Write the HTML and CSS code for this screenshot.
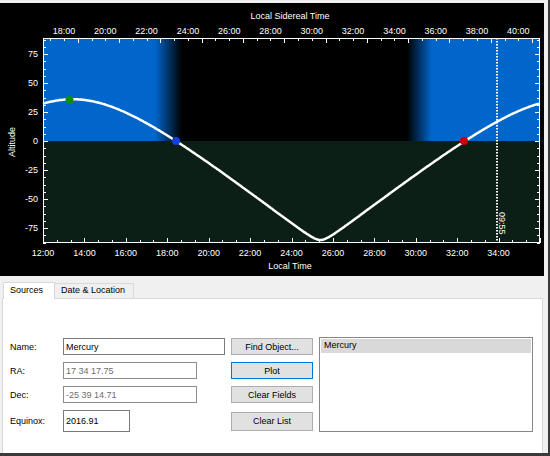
FILE: index.html
```html
<!DOCTYPE html>
<html lang="en">
<head>
  <meta charset="utf-8" />
  <title>Altitude Plot</title>
  <link rel="stylesheet" href="styles.css">
</head>
<body>
  <div id="window">

    <div id="chart">
      <svg id="plot" width="544" height="273" viewBox="0 3 544 273">
        <defs>
          <linearGradient id="sky" x1="43" y1="0" x2="540" y2="0" gradientUnits="userSpaceOnUse">
            <stop offset="0" stop-color="#0066cc" />
            <stop offset="0.2254" stop-color="#0066cc" />
            <stop offset="0.2797" stop-color="#000" />
            <stop offset="0.7324" stop-color="#000" />
            <stop offset="0.7827" stop-color="#0066cc" />
            <stop offset="1" stop-color="#0066cc" />
          </linearGradient>
        </defs>
        <rect x="0" y="3" width="544" height="273" fill="#000" />
        <rect x="43" y="38" width="497" height="103" fill="url(#sky)" />
        <rect x="43" y="141" width="497" height="102" fill="#0b1f16" />

        <path id="curve" d="" fill="none" stroke="#fff" stroke-width="2.5" stroke-linejoin="round" />
        <circle cx="69.5" cy="100" r="4" fill="#0e8e0e" />
        <circle cx="176" cy="141" r="4" fill="#1040e0" />
        <circle cx="464" cy="141" r="4" fill="#c80000" />

        <line x1="497" y1="38" x2="497" y2="243" stroke="#fff" stroke-width="2" stroke-dasharray="1.5 1.5" />
        <text class="now" transform="translate(499 212) rotate(90)">09:55</text>

        <rect x="43.5" y="38.5" width="496" height="204" fill="none" stroke="#fff" stroke-width="1" />
        <path id="ticks" d="" fill="none" stroke="#fff" stroke-width="1" />

        <g class="labels">
          <text class="title" x="290" y="19">Local Sidereal Time</text>
          <text x="64" y="34">18:00</text>
          <text x="105.3" y="34">20:00</text>
          <text x="146.6" y="34">22:00</text>
          <text x="187.9" y="34">24:00</text>
          <text x="229.2" y="34">26:00</text>
          <text x="270.5" y="34">28:00</text>
          <text x="311.8" y="34">30:00</text>
          <text x="353.1" y="34">32:00</text>
          <text x="394.4" y="34">34:00</text>
          <text x="435.7" y="34">36:00</text>
          <text x="477" y="34">38:00</text>
          <text x="518.3" y="34">40:00</text>

          <text x="43" y="256">12:00</text>
          <text x="84.4" y="256">14:00</text>
          <text x="125.8" y="256">16:00</text>
          <text x="167.3" y="256">18:00</text>
          <text x="208.7" y="256">20:00</text>
          <text x="250.1" y="256">22:00</text>
          <text x="291.5" y="256">24:00</text>
          <text x="332.9" y="256">26:00</text>
          <text x="374.4" y="256">28:00</text>
          <text x="415.8" y="256">30:00</text>
          <text x="457.2" y="256">32:00</text>
          <text x="498.6" y="256">34:00</text>
          <text class="title" x="290" y="269">Local Time</text>

          <text class="title" transform="translate(15 142) rotate(-90)">Altitude</text>
        </g>
        <g class="labels yaxis">
          <text x="38" y="57">75</text>
          <text x="38" y="86">50</text>
          <text x="38" y="115">25</text>
          <text x="38" y="144">0</text>
          <text x="38" y="173">-25</text>
          <text x="38" y="202">-50</text>
          <text x="38" y="231">-75</text>
        </g>
      </svg>
    </div>

    <div class="tabs">
      <div class="tab selected">Sources</div>
      <div class="tab">Date &amp; Location</div>
    </div>

    <div class="pane">
      <div class="sources">
        <label class="field-label">Name:</label>
        <input class="field name" type="text" value="Mercury" />
        <button class="btn">Find Object...</button>
        <div class="list">
          <div class="list-item">Mercury</div>
        </div>

        <label class="field-label">RA:</label>
        <input class="field coord ro" type="text" value="17 34 17.75" />
        <button class="btn default">Plot</button>

        <label class="field-label">Dec:</label>
        <input class="field coord ro" type="text" value="-25 39 14.71" />
        <button class="btn">Clear Fields</button>

        <label class="field-label">Equinox:</label>
        <input class="field equinox" type="text" value="2016.91" />
        <button class="btn tall">Clear List</button>
      </div>
    </div>

  </div>
  <script src="chart.js"></script>
</body>
</html>
```

FILE: styles.css
```css
html, body { margin: 0; padding: 0; }
body { background: #f0f0f0; font-family: "Liberation Sans", Arial, sans-serif; font-size: 9px; color: #000; }

#window {
    box-sizing: border-box;
    width: 550px;
    height: 456px;
    padding-top: 3px;
    border-right: 2px solid #3a3a3a;
    border-bottom: 3px solid #3a3a3a;
    overflow: hidden;
}

#chart { width: 544px; height: 273px; line-height: 0; }
#plot { display: block; }
#plot text { font-family: "Liberation Sans", Arial, sans-serif; font-size: 9px; fill: #fff; }
#plot .labels text { text-anchor: middle; }
#plot .yaxis text { text-anchor: end; }
#plot .now { text-anchor: start; }

/* tab bar */
.tabs {
    display: flex;
    align-items: flex-end;
    height: 16px;
    margin-top: 6px;
    padding-left: 3px;
    position: relative;
    z-index: 1;
}
.tab {
    box-sizing: border-box;
    height: 15px;
    line-height: 13px;
    padding-left: 6px;
    border: 1px solid #d9d9d9;
    border-bottom: none;
    background: #f0f0f0;
    width: 80px;
}
.tab.selected {
    height: 17px;
    line-height: 15px;
    width: 52px;
    margin-bottom: -1px;
    margin-right: -1px;
    background: #fff;
}

.pane {
    box-sizing: border-box;
    width: 541px;
    height: 156px;
    margin-left: 2px;
    padding: 39px 0 0 7px;
    background: #fff;
    border: 1px solid #d9d9d9;
}

.sources {
    display: grid;
    grid-template-columns: 47px 162px 82px 214px;
    grid-template-rows: 17px 17px 17px 22px;
    column-gap: 6px;
    row-gap: 7px;
}
.field-label { align-self: center; }

.field {
    box-sizing: border-box;
    height: 100%;
    margin: 0;
    padding: 0 2px;
    border: 1px solid #7a7a7a;
    font-family: inherit;
    font-size: 9px;
    color: #000;
    outline: none;
    justify-self: start;
}
.field.name { width: 162px; }
.field.coord { width: 134px; }
.field.equinox { width: 67px; }
.field.ro { color: #6d6d6d; border-color: #8c8c8c; }

.btn {
    box-sizing: border-box;
    height: 17px;
    margin: 0;
    padding: 0;
    border: 1px solid #adadad;
    background: #e1e1e1;
    font-family: inherit;
    font-size: 9px;
    color: #000;
}
.btn.default { border-color: #0078d7; }
.btn.tall { height: 19px; align-self: center; }

.list {
    grid-column: 4;
    grid-row: 1 / span 4;
    box-sizing: border-box;
    margin-top: -1px;
    height: 95px;
    padding: 1px;
    border: 1px solid #828790;
    background: #fff;
}
.list-item {
    height: 14px;
    line-height: 13px;
    padding-left: 3px;
    background: #d9d9d9;
}
```

FILE: chart.js
```js
(function () {
  var left = 43, right = 540, top = 38, bottom = 243, zero = 141;
  var hourPx = (right - left) / 24;    // local time runs 12:00 .. 36:00
  var degPx = 1.16;

  function yAlt(a) { return zero - a * degPx; }

  // axis ticks, all drawn inwards
  var d = '';
  var i, x, y, len;
  for (i = 0; i <= 36; i++) {
    x = left + i * (2 / 3) * hourPx;
    if (x > right) break;
    len = i % 3 === 0 ? 5 : 3;
    x = Math.round(x) + 0.5;
    d += 'M' + x + ' ' + bottom + 'v-' + len;
  }
  var lstStep = 41.3 / 3;
  var start = 64;
  while (start - lstStep >= left) start -= lstStep;
  for (x = start, i = Math.round((64 - start) / lstStep); x <= right; x += lstStep, i++) {
    len = i % 3 === 0 ? 5 : 3;
    d += 'M' + (Math.round(x) + 0.5) + ' ' + top + 'v' + len;
  }
  for (i = -14; i <= 14; i++) {
    y = yAlt(i * 6.25);
    if (y < top || y > bottom) continue;
    len = i % 4 === 0 ? 5 : 3;
    y = Math.round(y) + 0.5;
    d += 'M' + left + ' ' + y + 'h' + len;
    d += 'M' + right + ' ' + y + 'h-' + len;
  }
  document.getElementById('ticks').setAttribute('d', d);

  // altitude of the source through the night
  var rad = Math.PI / 180;
  var lat = 29.35 * rad, dec = -24.65 * rad, transit = 13.43;
  var pts = [];
  for (var t = 12; t <= 36.001; t += 0.05) {
    var h = (t - transit) * 15.041 * rad;
    var s = Math.sin(lat) * Math.sin(dec) + Math.cos(lat) * Math.cos(dec) * Math.cos(h);
    var alt = Math.asin(s) / rad;
    pts.push((left + (t - 12) * hourPx).toFixed(1) + ',' + yAlt(alt).toFixed(1));
  }
  document.getElementById('curve').setAttribute('d', 'M' + pts.join('L'));
})();
```
